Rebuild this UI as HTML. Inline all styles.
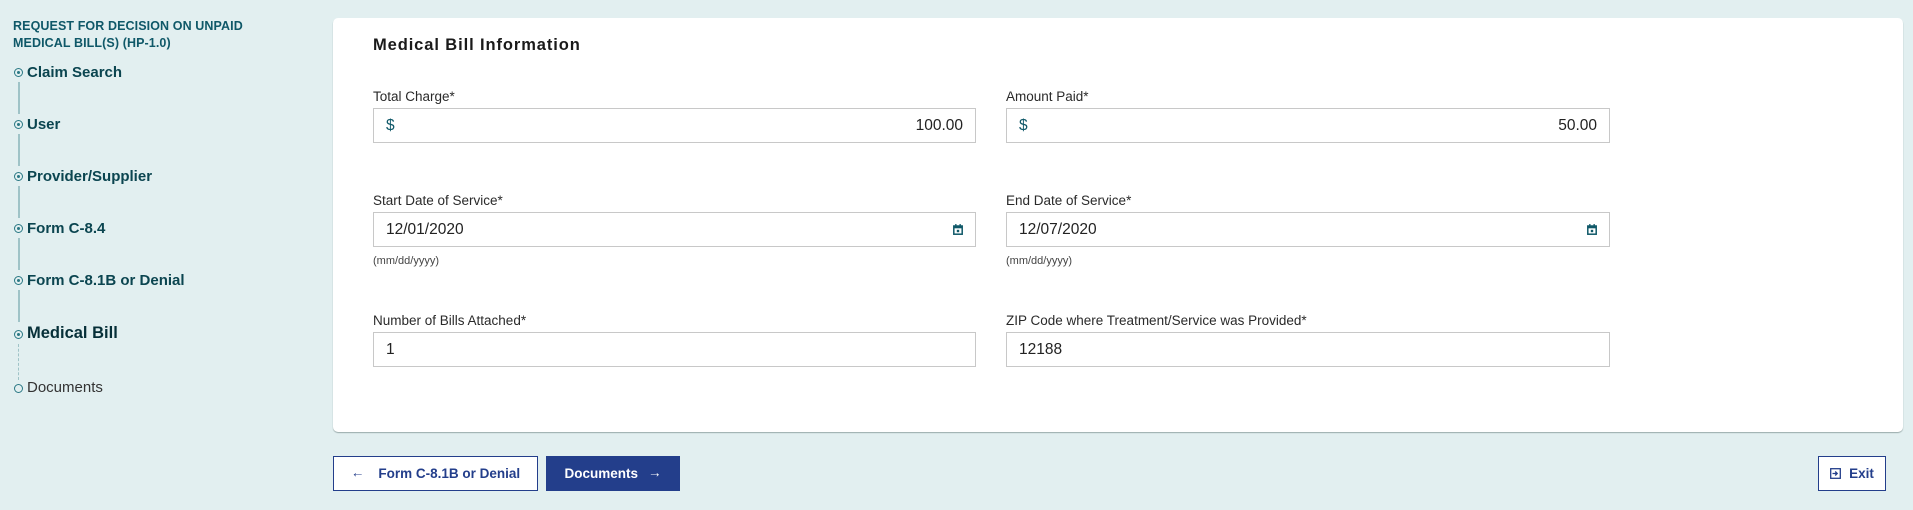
<!DOCTYPE html>
<html><head><meta charset="utf-8"><style>
*{box-sizing:border-box;margin:0;padding:0}
body{width:1913px;height:510px;background:#e2eff0;font-family:"Liberation Sans",Arial,sans-serif;position:relative;overflow:hidden}
.abs{position:absolute}
.hdr{left:13px;top:18px;color:#0f5868;font-weight:bold;font-size:12.5px;line-height:17px;letter-spacing:0.1px}
.step{left:27px;color:#0b4550;font-weight:bold;font-size:15px;line-height:18px}
.dot{width:9px;height:9px;border:1.3px solid #2a7884;border-radius:50%;left:14px}
.dot::after{content:"";position:absolute;left:1.5px;top:1.5px;width:3.5px;height:3.5px;border-radius:50%;background:#2a7884}
.line{left:18px;width:1.5px;background:#9fc3c7}
.panel{left:333px;top:18px;width:1570px;height:414px;background:#fff;border-radius:5px;box-shadow:0 1px 1px #9aa}
.title{left:373px;top:36px;font-size:16.5px;font-weight:bold;letter-spacing:0.9px;color:#1a1a1a}
.lbl{font-size:13.5px;color:#2a2a2a}
.inp{height:35px;border:1px solid #c8c8c8;background:#fff;font-size:15.5px;color:#222;padding:0 12px;display:flex;align-items:center}
.hint{font-size:11px;color:#444}
.btn{height:35px;display:flex;align-items:center;justify-content:center;font-size:13.5px;font-weight:bold;color:#233e8b;background:#fff;border:1px solid #233e8b}
</style></head><body>
<div class="abs hdr">REQUEST FOR DECISION ON UNPAID<br>MEDICAL BILL(S) (HP-1.0)</div>
<div class="abs dot" style="top:68px"></div><div class="abs step" style="top:64px">Claim Search</div>
<div class="abs line" style="top:82px;height:32px"></div>
<div class="abs dot" style="top:120px"></div><div class="abs step" style="top:116px">User</div>
<div class="abs line" style="top:134px;height:32px"></div>
<div class="abs dot" style="top:172px"></div><div class="abs step" style="top:168px">Provider/Supplier</div>
<div class="abs line" style="top:186px;height:32px"></div>
<div class="abs dot" style="top:224px"></div><div class="abs step" style="top:220px">Form C-8.4</div>
<div class="abs line" style="top:238px;height:32px"></div>
<div class="abs dot" style="top:276px"></div><div class="abs step" style="top:272px">Form C-8.1B or Denial</div>
<div class="abs line" style="top:290px;height:32px"></div>
<div class="abs dot" style="top:330px"></div><div class="abs step" style="top:324px;font-size:16.5px;font-weight:bold;color:#062f38">Medical Bill</div>
<div class="abs" style="left:18px;top:344px;height:36px;border-left:1.5px dashed #9fc3c7"></div>
<div class="abs" style="left:14px;top:384px;width:9px;height:9px;border:1.3px solid #2a7884;border-radius:50%"></div>
<div class="abs step" style="top:379px;font-weight:normal;color:#333">Documents</div>

<div class="abs panel"></div>
<div class="abs title">Medical Bill Information</div>

<div class="abs lbl" style="left:373px;top:89px">Total Charge*</div>
<div class="abs inp" style="left:373px;top:108px;width:603px;justify-content:space-between"><span style="color:#0f5868">$</span><span>100.00</span></div>
<div class="abs lbl" style="left:1006px;top:89px">Amount Paid*</div>
<div class="abs inp" style="left:1006px;top:108px;width:604px;justify-content:space-between"><span style="color:#0f5868">$</span><span>50.00</span></div>

<div class="abs lbl" style="left:373px;top:193px">Start Date of Service*</div>
<div class="abs inp" style="left:373px;top:212px;width:603px;justify-content:space-between"><span>12/01/2020</span><svg width="10" height="11" viewBox="0 0 10 11"><rect x="0.8" y="2" width="8.4" height="8.2" fill="none" stroke="#0f5868" stroke-width="1.5"/><rect x="0.8" y="2" width="8.4" height="2.3" fill="#0f5868"/><rect x="2.2" y="0" width="1.3" height="2.5" fill="#0f5868"/><rect x="6.5" y="0" width="1.3" height="2.5" fill="#0f5868"/><rect x="3.8" y="5.8" width="2.4" height="2.4" fill="#0f5868"/></svg></div>
<div class="abs hint" style="left:373px;top:255px">(mm/dd/yyyy)</div>
<div class="abs lbl" style="left:1006px;top:193px">End Date of Service*</div>
<div class="abs inp" style="left:1006px;top:212px;width:604px;justify-content:space-between"><span>12/07/2020</span><svg width="10" height="11" viewBox="0 0 10 11"><rect x="0.8" y="2" width="8.4" height="8.2" fill="none" stroke="#0f5868" stroke-width="1.5"/><rect x="0.8" y="2" width="8.4" height="2.3" fill="#0f5868"/><rect x="2.2" y="0" width="1.3" height="2.5" fill="#0f5868"/><rect x="6.5" y="0" width="1.3" height="2.5" fill="#0f5868"/><rect x="3.8" y="5.8" width="2.4" height="2.4" fill="#0f5868"/></svg></div>
<div class="abs hint" style="left:1006px;top:255px">(mm/dd/yyyy)</div>

<div class="abs lbl" style="left:373px;top:313px">Number of Bills Attached*</div>
<div class="abs inp" style="left:373px;top:332px;width:603px">1</div>
<div class="abs lbl" style="left:1006px;top:313px">ZIP Code where Treatment/Service was Provided*</div>
<div class="abs inp" style="left:1006px;top:332px;width:604px">12188</div>

<div class="abs btn" style="left:333px;top:456px;width:205px"><span style="margin-right:14px;font-weight:normal;position:relative;top:-1px">&#8592;</span>Form C-8.1B or Denial</div>
<div class="abs btn" style="left:546px;top:456px;width:134px;background:#233e8b;color:#fff">Documents<span style="margin-left:10px;font-weight:normal;position:relative;top:-1px">&#8594;</span></div>
<div class="abs btn" style="left:1818px;top:456px;width:68px"><svg width="11" height="11" viewBox="0 0 11 11" style="margin-right:8px"><rect x="0.7" y="0.7" width="9.6" height="9.6" fill="none" stroke="#233e8b" stroke-width="1.3"/><path d="M2.5 5.5H7M5.2 3.5L7.2 5.5 5.2 7.5" fill="none" stroke="#233e8b" stroke-width="1.3"/></svg>Exit</div>
</body></html>
